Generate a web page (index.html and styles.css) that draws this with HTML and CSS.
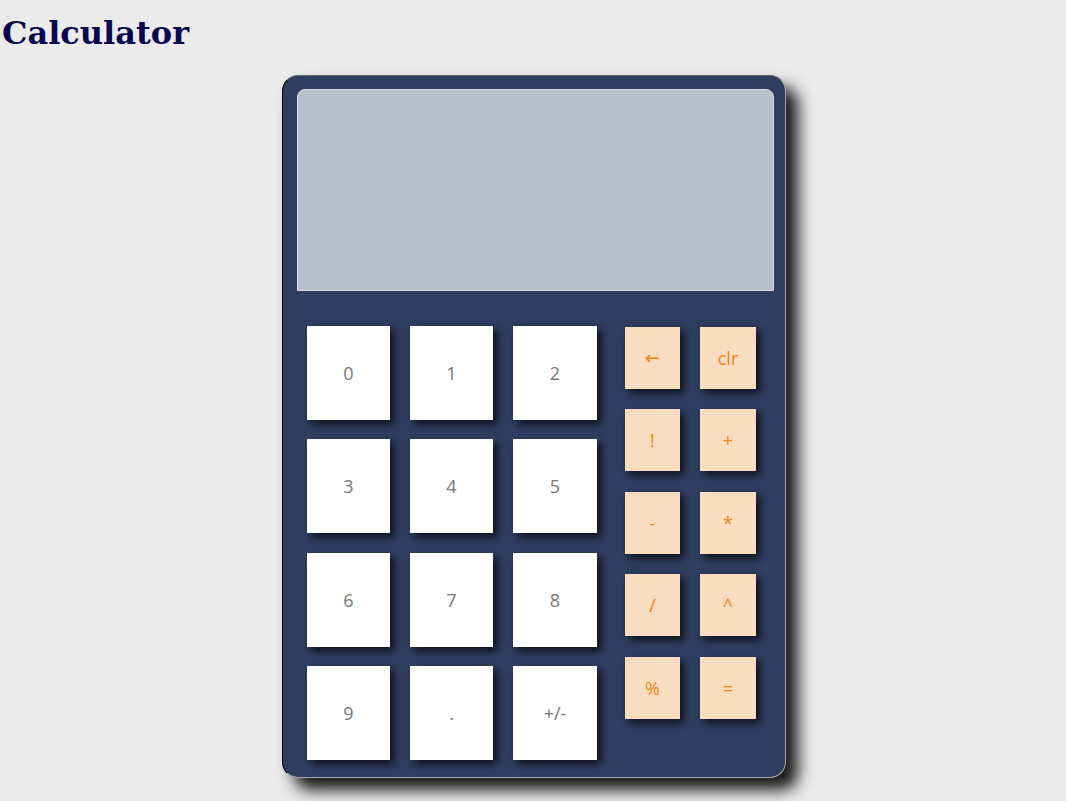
FILE: index.html
```html
<!DOCTYPE html>
<html>
<head>
<meta charset="utf-8">
<title>Calculator</title>
<link rel="stylesheet" href="styles.css">
</head>
<body>
<h1 class="title">Calculator</h1>
<div class="calc">
  <div class="display"></div>
  <div class="keypad">
    <div class="numbers">
      <button class="key num">0</button>
      <button class="key num">1</button>
      <button class="key num">2</button>
      <button class="key num">3</button>
      <button class="key num">4</button>
      <button class="key num">5</button>
      <button class="key num">6</button>
      <button class="key num">7</button>
      <button class="key num">8</button>
      <button class="key num">9</button>
      <button class="key num">.</button>
      <button class="key num">+/-</button>
    </div>
    <div class="ops">
      <button class="key op arrow">&larr;</button>
      <button class="key op">clr</button>
      <button class="key op">!</button>
      <button class="key op">+</button>
      <button class="key op">-</button>
      <button class="key op">*</button>
      <button class="key op">/</button>
      <button class="key op">^</button>
      <button class="key op">%</button>
      <button class="key op">=</button>
    </div>
  </div>
</div>
</body>
</html>
```
FILE: styles.css
```css
html, body {
  margin: 0;
  padding: 0;
  background: #ebebeb;
}
body {
  padding-left: 2px;
  padding-bottom: 23px;
}
.title {
  margin: 15px 0 0;
  font-family: "DejaVu Serif", serif;
  font-weight: bold;
  font-size: 32px;
  line-height: 37px;
  color: #07074f;
}
.calc {
  box-sizing: border-box;
  width: 504px;
  margin: 23px auto 0;
  background: #2f3d60;
  border: 1px solid;
  border-color: #666 #aaa #aaa #000;
  border-radius: 16px;
  padding: 13px 11px 17px 14px;
  box-shadow: 12px 12px 16px rgba(0, 0, 0, 0.9);
}
.display {
  box-sizing: border-box;
  height: 202px;
  background: #b8bfcb;
  border: 1px solid #dcdcdc;
  border-radius: 8px 8px 0 0;
}
.keypad {
  display: flex;
  align-items: flex-start;
  margin-top: 35px;
  padding-left: 10px;
}
.numbers {
  display: grid;
  grid-template-columns: 83px 83px 84px;
  grid-template-rows: repeat(4, 94px);
  column-gap: 20px;
  row-gap: 19.33px;
}
.ops {
  display: grid;
  grid-template-columns: 55px 56px;
  grid-template-rows: repeat(5, 62px);
  column-gap: 20px;
  row-gap: 20.5px;
  margin-left: 28px;
  margin-top: 0.5px;
}
.key {
  display: flex;
  align-items: center;
  justify-content: center;
  border: none;
  margin: 0;
  padding: 0;
  font-family: "Open Sans", "Noto Sans", sans-serif;
  font-size: 18px;
  box-shadow: 4px 4px 8px rgba(0, 0, 0, 0.75);
  cursor: pointer;
}
.num {
  background: #ffffff;
  color: #777777;
}
.op {
  background: #f9ddc1;
  color: #fb7f12;
}
.arrow {
  font-family: "DejaVu Sans", sans-serif;
  font-size: 18px;
}
```
